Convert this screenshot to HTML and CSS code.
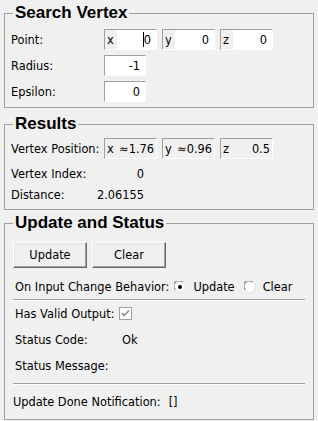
FILE: index.html
```html
<!DOCTYPE html>
<html lang="en">
<head>
    <meta charset="UTF-8">
    <meta name="viewport" content="width=device-width, initial-scale=1.0">
    <title>Search Vertex</title>
    <link rel="stylesheet" href="styles.css">
</head>
<body>

    <!-- 검색 조건 -->
    <fieldset class="group first">
        <legend>Search Vertex</legend>
        <div class="body search">
            <div class="row">
                <span class="label">Point:</span>
                <div class="vec">
                    <span class="field edit"><span class="axis">x</span><span class="val"><span class="caret"></span>0</span></span>
                    <span class="field edit"><span class="axis">y</span><span class="val">0</span></span>
                    <span class="field edit"><span class="axis">z</span><span class="val">0</span></span>
                </div>
            </div>
            <div class="row">
                <span class="label">Radius:</span>
                <span class="field edit small"><span class="val">-1</span></span>
            </div>
            <div class="row">
                <span class="label">Epsilon:</span>
                <span class="field edit small"><span class="val">0</span></span>
            </div>
        </div>
    </fieldset>

    <!-- 결과 -->
    <fieldset class="group results">
        <legend>Results</legend>
        <div class="body">
            <div class="row">
                <span class="label">Vertex Position:</span>
                <div class="vec">
                    <span class="field"><span class="axis">x</span><span class="val">≈1.76</span></span>
                    <span class="field"><span class="axis">y</span><span class="val">≈0.96</span></span>
                    <span class="field"><span class="axis">z</span><span class="val">0.5</span></span>
                </div>
            </div>
            <div class="row text">
                <span class="label">Vertex Index:</span>
                <span class="num">0</span>
            </div>
            <div class="row text">
                <span class="label">Distance:</span>
                <span class="num">2.06155</span>
            </div>
        </div>
    </fieldset>

    <!-- 업데이트 상태 -->
    <fieldset class="group status">
        <legend>Update and Status</legend>
        <div class="body">
            <div class="buttons">
                <button>Update</button>
                <button>Clear</button>
            </div>
            <div class="row text radios">
                <span>On Input Change Behavior:</span>
                <span class="radio">
                    <svg width="12" height="12" viewBox="0 0 12 12">
                        <circle cx="6" cy="6" r="5.5" fill="#fff" stroke="#e0e0e0"/>
                        <path d="M1.2 8.5 A5 5 0 0 1 8.5 1.2" fill="none" stroke="#8a8a8a" stroke-width="1.2"/>
                        <circle cx="6" cy="6" r="2" fill="#000"/>
                    </svg>
                    Update
                </span>
                <span class="radio">
                    <svg width="12" height="12" viewBox="0 0 12 12">
                        <circle cx="6" cy="6" r="5.5" fill="#fff" stroke="#e0e0e0"/>
                        <path d="M1.2 8.5 A5 5 0 0 1 8.5 1.2" fill="none" stroke="#8a8a8a" stroke-width="1.2"/>
                    </svg>
                    Clear
                </span>
            </div>
            <div class="sep"></div>
            <div class="row text indent">
                <span class="label wide">Has Valid Output:</span>
                <svg class="check" width="13" height="13" viewBox="0 0 13 13">
                    <rect x="0.5" y="0.5" width="12" height="12" fill="#fff" stroke="#a0a0a0"/>
                    <path d="M3 6 L5 8.5 L10 3.5" fill="none" stroke="#8d8d8d" stroke-width="1.6"/>
                </svg>
            </div>
            <div class="row text indent">
                <span class="label wide">Status Code:</span>
                <span class="ok">Ok</span>
            </div>
            <div class="row text indent">
                <span class="label wide">Status Message:</span>
            </div>
            <div class="sep low"></div>
            <div class="row text done">
                <span>Update Done Notification:</span>
                <span class="brackets">[]</span>
            </div>
        </div>
    </fieldset>

</body>
</html>
```

FILE: styles.css
```css
body {
    margin: 0;
    background-color: #F0F0F0;
    font-family: "DejaVu Sans", sans-serif;
    font-size: 11.4px;
    color: #000;
}

.group {
    margin: 6px 4px 0 4px;
    padding: 0;
    border: 1px solid #A0A0A0;
    min-width: 0;
}
.group.first {
    margin-top: 3px;
}
.group.status {
    margin-top: 3px;
}
.group legend {
    margin-left: 8px;
    padding: 0 2px;
    font-family: "Liberation Sans", Arial, sans-serif;
    font-weight: bold;
    font-size: 17px;
    line-height: 20px;
}

.body {
    padding: 4px 6px 4px 6px;
    display: flex;
    flex-direction: column;
}
.search {
    padding-top: 6px;
    padding-bottom: 5px;
    gap: 5px;
}
.results .row.text {
    height: 21px;
}
.results .row:first-child {
    margin-bottom: 4px;
}

.row {
    display: flex;
    align-items: center;
    height: 21px;
}
.label {
    width: 93px;
    flex-shrink: 0;
    white-space: nowrap;
}

.vec {
    display: flex;
    gap: 5px;
}
.field {
    box-sizing: border-box;
    width: 53px;
    height: 21px;
    display: flex;
    align-items: center;
    border: 1px solid;
    border-color: #A0A0A0 #FFFFFF #FFFFFF #A0A0A0;
    padding-right: 2px;
    white-space: nowrap;
}
.field .axis {
    width: 10px;
    padding-left: 2px;
    align-self: stretch;
    display: flex;
    align-items: center;
}
.field .val {
    flex: 1;
    display: flex;
    justify-content: flex-end;
    align-items: center;
}
.field.edit {
    padding-right: 0;
}
.field.edit .val {
    align-self: stretch;
    background-color: #FFFFFF;
    padding-right: 5px;
}
.field.small {
    width: 42px;
}
.caret {
    display: inline-block;
    width: 1px;
    height: 15px;
    background-color: #000;
}

.num {
    width: 40px;
    display: flex;
    justify-content: flex-end;
    white-space: nowrap;
}

/* 업데이트 영역 */
.status .body {
    padding: 9px 8px 7px 8px;
}
.buttons {
    display: flex;
    gap: 5px;
}
button {
    width: 74px;
    height: 26px;
    font-family: "DejaVu Sans", sans-serif;
    font-size: 11.4px;
    color: #000;
    background-color: #F0F0F0;
    border: 1px solid;
    border-color: #FFFFFF #696969 #696969 #FFFFFF;
    box-shadow: inset -1px -1px #A0A0A0, inset 1px 1px #E3E3E3;
    padding: 0;
}
.radios {
    margin-top: 8px;
    padding-left: 2px;
    gap: 5px;
    white-space: nowrap;
}
.radio {
    display: flex;
    align-items: center;
    gap: 7px;
    margin-right: 4px;
}
.sep {
    margin-top: 2px;
    border-top: 1px solid #A0A0A0;
    border-bottom: 1px solid #FFFFFF;
}
.sep + .row {
    margin-top: 2px;
}
.indent {
    padding-left: 2px;
}
.indent + .indent {
    margin-top: 5px;
}
.label.wide {
    width: 104px;
}
.check {
    margin-top: -1px;
}
.ok {
    padding-left: 3px;
}
.sep.low {
    margin-top: 7px;
}
.sep.low + .row {
    margin-top: 6px;
}
.done {
    gap: 8px;
}
```
